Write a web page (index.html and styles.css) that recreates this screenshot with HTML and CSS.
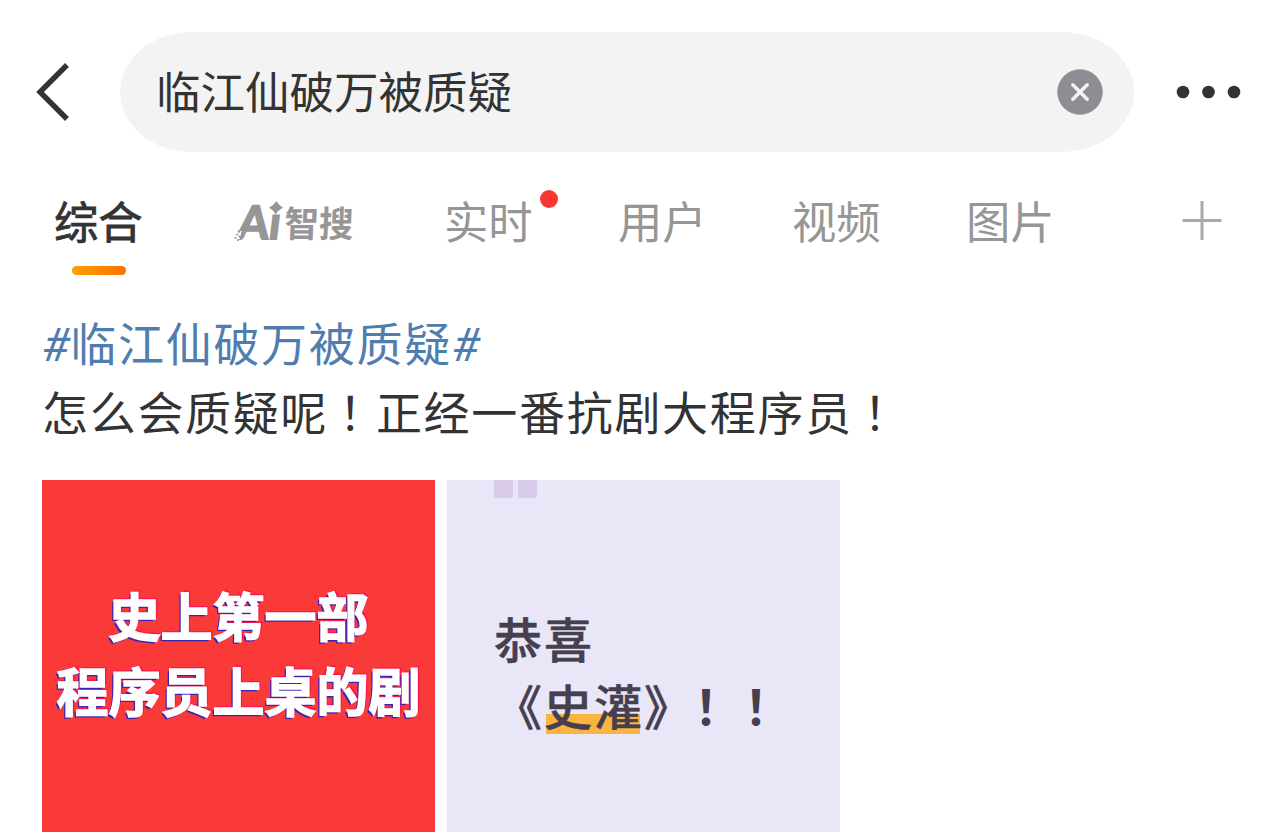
FILE: index.html
```html
<!DOCTYPE html>
<html lang="zh-CN">
<head>
    <meta charset="UTF-8">
    <meta name="viewport" content="width=device-width, initial-scale=1.0">
    <title>临江仙破万被质疑</title>
    <link rel="stylesheet" href="styles.css">
</head>
<body>
    <header class="header">
        <svg class="back" width="34" height="58" viewBox="0 0 34 58">
            <path d="M31 2 L4 29 L31 56" fill="none" stroke="#333" stroke-width="5.4"/>
        </svg>
        <div class="search">
            <span class="search-text">临江仙破万被质疑</span>
            <svg class="clear" width="46" height="46" viewBox="0 0 46 46">
                <circle cx="23" cy="23" r="22.7" fill="#8e8d93"/>
                <path d="M15.8 15.8 L30.2 30.2 M30.2 15.8 L15.8 30.2" stroke="#f4f4f4" stroke-width="3.4" stroke-linecap="round"/>
            </svg>
        </div>
        <svg class="more" width="66" height="14" viewBox="0 0 66 14">
            <circle cx="7" cy="7" r="6.3" fill="#333"/>
            <circle cx="32.5" cy="7" r="6.3" fill="#333"/>
            <circle cx="58" cy="7" r="6.3" fill="#333"/>
        </svg>
    </header>

    <nav class="tabs">
        <a class="tab active">综合</a>
        <a class="tab">
            <svg class="ai-logo" width="130" height="64" viewBox="0 0 130 64">
                <g fill="#969696" stroke="#969696">
                    <text class="ai-latin" x="0" y="0" transform="translate(2 50.5) skewX(-7)" textLength="43" lengthAdjust="spacingAndGlyphs">Ai</text>
                    <text class="ai-han" x="0" y="0" transform="translate(50 48.5) skewX(-2)" textLength="69" lengthAdjust="spacingAndGlyphs">智搜</text>
                </g>
                <rect x="35" y="12" width="13" height="13" fill="#fff"/>
                <path d="M42.5 13 Q44.5 17 49 19.500 Q44.500 22 41.500 26.500 Q39.500 22 35 19.500 Q40 17 42.500 13Z" fill="#969696"/>
                <path d="M0 43h8l-3 9h-5z" fill="#fff"/>
                <g fill="#969696">
                    <circle cx="5" cy="43.500" r="1.3"/>
                    <circle cx="8" cy="45.500" r="1.100"/>
                    <circle cx="3" cy="46.500" r="1.100"/>
                    <circle cx="5.500" cy="48.500" r="1.100"/>
                    <circle cx="1.500" cy="50" r="1.100"/>
                    <circle cx="4" cy="52" r="1.100"/>
                </g>
            </svg>
        </a>
        <a class="tab">实时<i class="dot"></i></a>
        <a class="tab">用户</a>
        <a class="tab">视频</a>
        <a class="tab">图片</a>
        <svg class="add" width="40" height="40" viewBox="0 0 40 40">
            <path d="M0.5 19.5 H39.5 M20 0 V39" stroke="#aaa" stroke-width="3"/>
        </svg>
    </nav>

    <main class="post">
        <p class="post-text"><a class="topic"><span class="hash">#</span>临江仙破万被质疑<span class="hash">#</span></a><br>怎么会质疑呢<span class="mark" lang="zh-Hant">！</span>正经一番抗剧大程序员<span class="mark" lang="zh-Hant">！</span></p>
        <div class="pictures">
            <div class="picture red">
                <p class="slogan">史上第一部</p>
                <p class="slogan">程序员上桌的剧</p>
            </div>
            <div class="picture purple">
                <div class="quote"><i></i><i></i></div>
                <p class="cheer">恭喜<br>《<span class="underline">史灌</span>》<span class="bang">！！</span></p>
            </div>
        </div>
    </main>
</body>
</html>
```
FILE: styles.css
```css
* {
    box-sizing: border-box;
}

body {
    margin: 0;
    background: #fff;
    color: #333;
    font-family: "Noto Sans CJK SC", sans-serif;
}

p {
    margin: 0;
}

.header {
    display: flex;
    align-items: center;
    padding: 32px 42px 0 36px;
}

.search {
    display: flex;
    align-items: center;
    justify-content: space-between;
    width: 1014px;
    height: 120px;
    margin: 0 42px 0 50px;
    padding: 0 31px 0 36px;
    border-radius: 72px / 60px;
    background: #f3f3f3;
}

.search-text {
    padding-bottom: 4px;
    font-size: 44.5px;
    line-height: 64px;
}

.tabs {
    display: flex;
    align-items: center;
    height: 138px;
    padding-left: 54px;
}

.tab {
    position: relative;
    width: 174px;
    height: 66px;
    color: #969696;
    font-size: 44.3px;
    line-height: 64px;
    white-space: nowrap;
}

.tab:first-child {
    width: 180px;
}

.tab:nth-child(2) {
    width: 210px;
}

.active {
    color: #333;
    -webkit-text-stroke: 0.8px #333;
}

.active::after {
    content: "";
    position: absolute;
    left: 18px;
    top: 78px;
    width: 54px;
    height: 9px;
    border-radius: 5px;
    background: linear-gradient(90deg, #ffa200, #ff6f00);
}

.ai-logo {
    display: block;
    overflow: visible;
}

.ai-latin {
    font: bold 46px Lato, sans-serif;
    stroke-width: 1.8px;
}

.ai-han {
    font: bold 36px "Noto Sans CJK SC", sans-serif;
    stroke-width: 0;
}

.dot {
    position: absolute;
    left: 96px;
    top: 2px;
    width: 18px;
    height: 18px;
    border-radius: 50%;
    background: #f93632;
}

.add {
    margin-left: 42px;
}

.post {
    padding: 17px 42px 0;
}

.post-text {
    height: 138px;
    font-size: 46px;
    line-height: 69px;
    letter-spacing: 1.7px;
}

.topic {
    color: #507daf;
}

.hash {
    font-family: Roboto, sans-serif;
    font-style: italic;
    line-height: 1;
    letter-spacing: 0.8px;
}

.mark {
    position: relative;
    left: -1px;
    font-family: "Noto Sans CJK TC", sans-serif;
}

.pictures {
    display: flex;
    gap: 12px;
    margin-top: 35px;
}

.picture {
    width: 393px;
    height: 352px;
}

.red {
    padding-top: 97px;
    background: #f93a38;
}

.slogan {
    color: #fff;
    font-size: 52px;
    font-weight: bold;
    line-height: 75px;
    text-align: center;
    -webkit-text-stroke: 1.4px #fff;
    text-shadow: -2px 2px 0 #3c22b4, 2px -2px 0 #fb1652;
}

.purple {
    padding-left: 47px;
    background: #e9e6f7;
}

.quote {
    display: flex;
    gap: 5px;
    height: 18px;
}

.quote i {
    width: 19px;
    border-radius: 0 0 2px 2px;
    background: #d9cbea;
}

.cheer {
    margin-top: 106px;
    color: #453f4f;
    font-size: 48px;
    font-weight: 500;
    line-height: 67px;
    letter-spacing: 2px;
    -webkit-text-stroke: 0.5px #453f4f;
}

.underline {
    background: linear-gradient(#fbb441, #fbb441) 2px 45px / 94px 20px no-repeat;
}

.bang {
    font-weight: bold;
    -webkit-text-stroke: 0;
}
```
